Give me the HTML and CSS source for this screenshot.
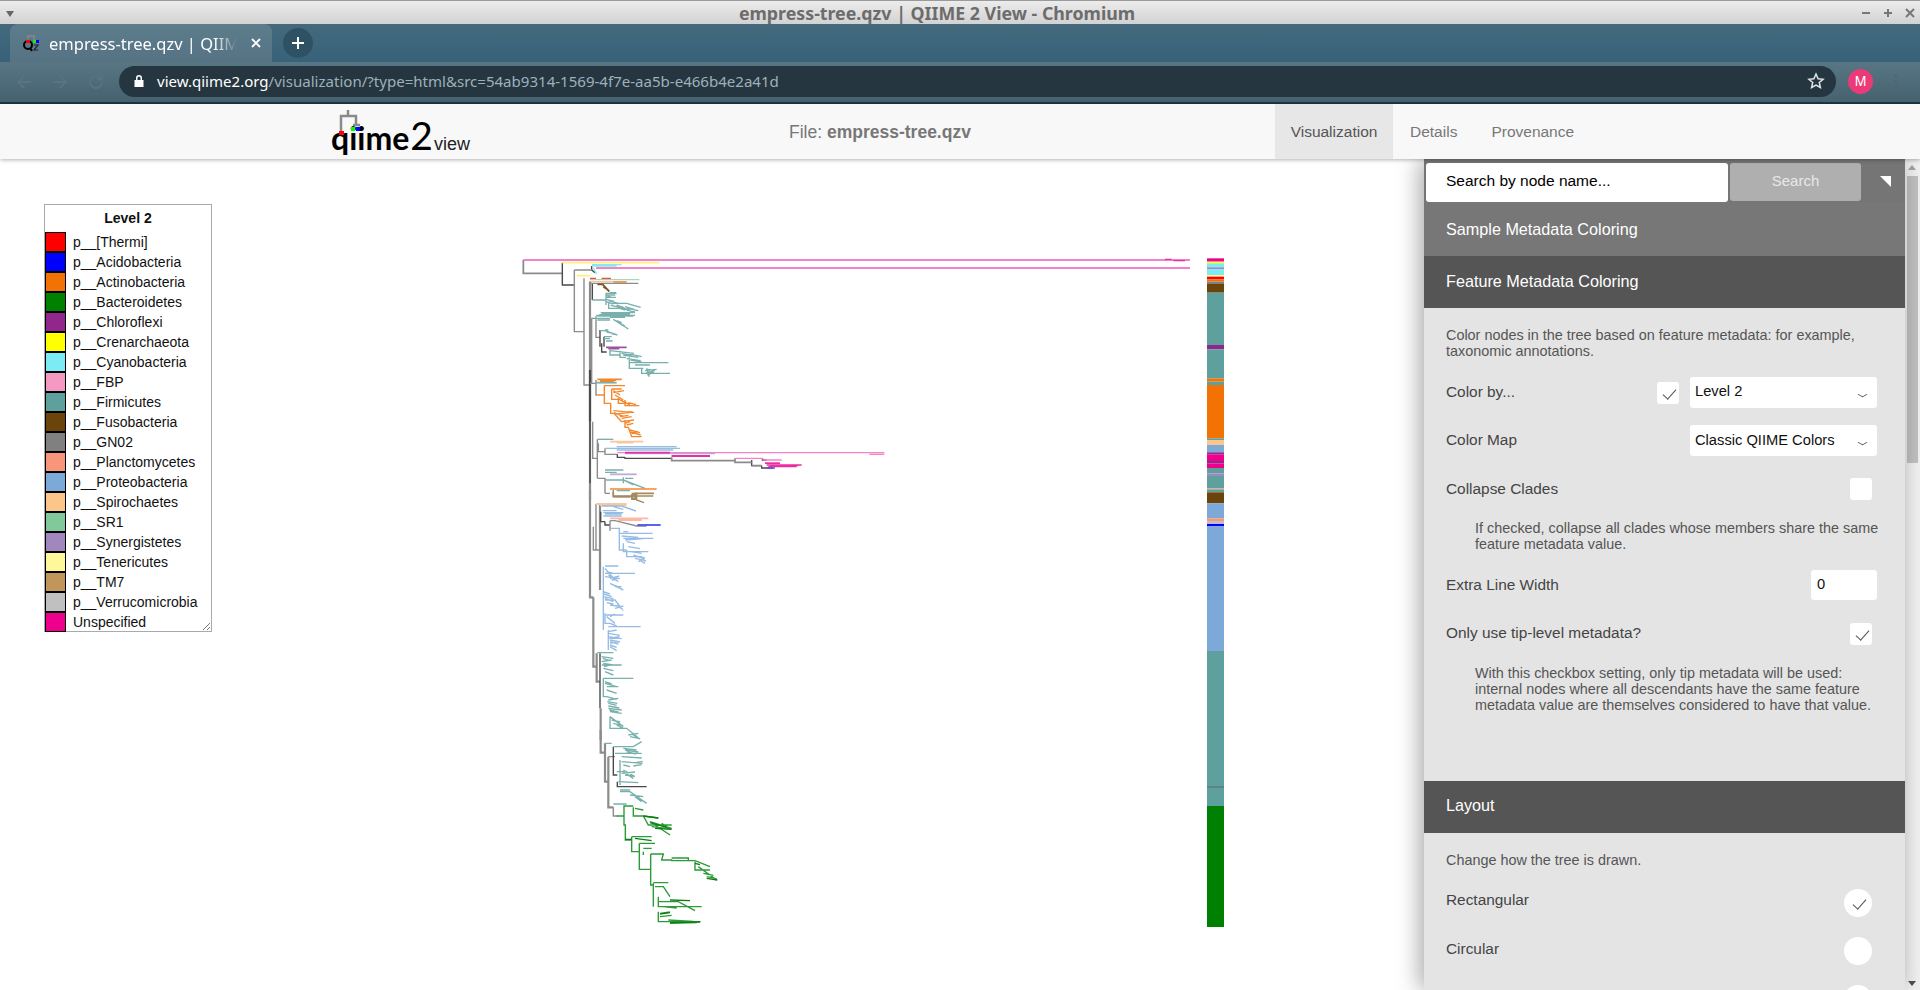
FILE: index.html
```html
<!DOCTYPE html>
<html lang="en">
<head>
  <meta charset="UTF-8">
  <title>empress-tree.qzv | QIIME 2 View - Chromium</title>
  <link rel="stylesheet" href="styles.css">
</head>
<body>

  <!-- window title -->
  <div class="titlebar">
    <span class="win-menu"></span>
    <span class="win-title">empress-tree.qzv | QIIME 2 View - Chromium</span>
    <div class="win-buttons">
      <svg width="12" height="12" viewBox="0 0 12 12"><path d="M2 6h8" class="win-icon"/></svg>
      <svg width="12" height="12" viewBox="0 0 12 12"><path d="M2 6h8M6 2v8" class="win-icon"/></svg>
      <svg width="12" height="12" viewBox="0 0 12 12"><path d="M2 2l8 8M10 2l-8 8" class="win-icon"/></svg>
    </div>
  </div>

  <!-- browser tabs -->
  <div class="tabstrip">
    <div class="tab">
      <svg class="favicon" width="18" height="18" viewBox="0 0 18 18">
        <path d="M6 5V2h6v4" class="fav-tree"/>
        <circle cx="6" cy="11" r="4" class="fav-q"/>
        <path d="M8 14l2 3" class="fav-q"/>
        <rect x="4" y="6" width="4" height="3" class="fav-red"/>
        <rect x="11" y="6" width="3" height="3" class="fav-green"/>
        <rect x="14" y="6" width="3" height="3" class="fav-blue"/>
        <path d="M12 11h4l-4 5h4" class="fav-two"/>
      </svg>
      <span class="tab-title">empress-tree.qzv | QIIM</span>
      <svg class="tab-close" width="12" height="12" viewBox="0 0 12 12"><path d="M2 2l8 8M10 2l-8 8"/></svg>
    </div>
    <div class="new-tab">
      <svg width="16" height="16" viewBox="0 0 16 16"><path d="M8 2v12M2 8h12"/></svg>
    </div>
  </div>

  <!-- browser toolbar -->
  <div class="toolbar">
    <div class="nav-buttons">
      <svg width="18" height="18" viewBox="0 0 18 18"><path d="M16 9H3M9 3L3 9l6 6"/></svg>
      <svg width="18" height="18" viewBox="0 0 18 18"><path d="M2 9h13M9 3l6 6-6 6"/></svg>
      <svg width="18" height="18" viewBox="0 0 18 18"><path d="M15 9a6 6 0 1 1-2-4.500L15 6.500M15 2v4.500h-4.500"/></svg>
    </div>
    <div class="omnibox">
      <svg class="lock" width="12" height="14" viewBox="0 0 12 14"><path d="M3 6V4a3 3 0 0 1 6 0v2h1.500v7h-9V6zM4.500 6h3V4a1.500 1.500 0 0 0-3 0z"/></svg>
      <span class="url"><b>view.qiime2.org</b>/visualization/?type=html&amp;src=54ab9314-1569-4f7e-aa5b-e466b4e2a41d</span>
      <svg class="star" width="18" height="18" viewBox="0 0 18 18"><path d="M9 2l2.100 4.700 5 .5-3.800 3.300 1.100 5L9 13l-4.400 2.500 1.100-5L1.900 7.200l5-.5z"/></svg>
    </div>
    <div class="avatar">M</div>
    <div class="menu-dots"><i></i><i></i><i></i></div>
  </div>

  <!-- qiime2 view navbar -->
  <div class="qiime-nav">
    <div class="logo">
      <svg class="logo-tree" width="24" height="26" viewBox="0 0 24 26">
        <path d="M9 0v6M2 24V6h15v9M14 15h7" class="logo-branch"/>
        <rect x="0" y="21" width="5" height="4" class="fav-red"/>
        <rect x="12" y="17" width="4" height="4" class="fav-green"/>
        <rect x="17" y="17" width="4" height="4" class="fav-blue"/>
      </svg>
      <span class="logo-qiime">qiime</span><span class="logo-two">2</span><span class="logo-view">view</span>
    </div>
    <div class="file-name">File: <b>empress-tree.qzv</b></div>
    <ul class="nav-tabs">
      <li class="active">Visualization</li>
      <li class="tab-details">Details</li>
      <li>Provenance</li>
    </ul>
  </div>

  <div class="content">
    <div class="stage">

      <!-- the tree and its barplot, coordinates taken from the page -->
      <svg class="tree" width="1300" height="831" viewBox="0 159 1300 831">
        <g transform="translate(510 240) scale(.33333)">
          <path class="c-pink thick" d="M40 60H2040M258 84H2040"/>
          <path class="c-hot" d="M1965 58H1985M1990 62H2025"/>
          <path class="c-grey thick" d="M40 60V100H157"/>
          <path class="c-dark" d="M157 68V135H193M245 78V90L255 98"/>
          <path class="c-grey" d="M193 90V275H222M193 90H245M222 115V435H240"/>
          <path class="c-yellow thick" d="M157 68H448M200 107H240"/>
          <path class="c-cyan" d="M246 74H335M246 78H320M250 84L260 102"/>
          <path class="c-red" d="M240 115H258M275 115H303"/>
          <path class="c-sr" d="M240 119H388"/>
          <path class="c-tan" d="M237 125H350"/>
          <path class="c-orange" d="M310 126H350"/>
          <path class="c-grey" d="M240 130H385"/>
          <path class="c-grey wide" d="M240 125V780"/>
          <path class="c-dark wide" d="M240 390V545"/>
          <path class="c-dark" d="M240 545V730M247 132V180"/>
          <path class="c-firm" d="M247 180H288M288 160V195M288 160H320M288 165H316M290 172H318M288 178L312 184M288 185L310 192M296 190V205H345M310 190H350L392 202M320 195L365 215H375M335 200L355 212M300 158H318M292 168L305 172M296 182L325 190M302 196L340 204M330 205L345 210M345 200L372 208M350 205L385 212"/>
          <path class="c-brown thick" d="M262 133H278L298 155M280 140L295 150"/>
          <path class="c-grey" d="M245 235V430M245 235H258"/>
          <path class="c-firm" d="M258 228V240M258 226H375M272 218H375M258 235H300M275 222H360M262 228H370M300 232H345M310 238L355 267M262 240H300M268 224H350M320 242L335 248M330 250L345 258"/>
          <path class="c-grey" d="M258 240V292H270"/>
          <path class="c-dark" d="M270 270V320M282 290V320M275 310V336H290"/>
          <path class="c-firm" d="M270 272H285L322 285M285 270H295M282 290H305M282 296H300M288 303H308M290 276L310 280M300 280L318 284"/>
          <path class="c-purple thick" d="M288 322H350M295 326H328"/>
          <path class="c-firm" d="M300 330V345H330M330 332V352H348M300 332L372 340M348 340L395 350M335 340L365 346M358 352V385H400M358 368H475M375 375H420M395 385V400H480M410 385L418 410M405 392L440 388M410 398L435 392M415 388L430 396M340 345L385 352M350 356L392 362M362 360L395 366M405 400L432 396M412 405L428 398"/>
          <path class="c-grey" d="M240 430H258M258 420V465H262"/>
          <path class="c-orange thick" d="M262 418H335M270 420H318M270 424H312"/>
          <path class="c-firm thick" d="M258 428H320"/>
          <path class="c-orange" d="M262 465H283M283 437V490H302M283 437H345M305 447H335M305 447V478H330M310 458L342 452M325 470V490H365M345 480V497H388M302 490V520H312L335 545M310 512L372 518M320 522L368 516M330 530L355 526M335 545L372 540M345 540V562H355M350 555L370 550M355 562L365 590H395M360 570L390 578M365 580L385 574M310 452L330 465M315 465L340 480M330 480L360 495M355 488L378 494M312 518L340 530M335 535L365 530M345 550L360 545M358 575L392 585"/>
          <path class="c-grey" d="M248 545V655H262M262 598V715"/>
          <path class="c-firm" d="M262 598H310"/>
          <path class="c-tan thick" d="M300 605H400M320 608H370"/>
          <path class="c-grey" d="M265 610V635H285M285 625V643H322"/>
          <path class="c-blue" d="M285 625H510M320 620H500M320 630H490"/>
          <path class="c-blue thick" d="M345 640H615"/>
          <path class="c-pink" d="M322 638H1123M485 648H600M1078 643H1123"/>
          <path class="c-hot thick" d="M345 638H480M485 648H600"/>
          <path class="c-dark" d="M322 643V652H345M345 652V655H485M725 660V677H755M755 660H770M755 677V684H790"/>
          <path class="c-grey thick" d="M485 652V662H675M675 655V667H725M725 677H755"/>
          <path class="c-pink" d="M675 655H760M760 660H815M765 668H810"/>
          <path class="c-hot" d="M770 675H875M775 680H860M765 670H810M780 677H865"/>
          <path class="c-acido" d="M770 684H795"/>
          <path class="c-grey" d="M262 715H285V760M285 760H300"/>
          <path class="c-firm" d="M285 690H340M285 697H320M285 720H340L405 745M340 712V730M345 715H370M320 752H360M345 722L370 735"/>
          <path class="c-syner thick" d="M300 703H380"/>
          <path class="c-orange" d="M300 747H440"/>
          <path class="c-dark" d="M310 755V770H360"/>
          <path class="c-tm7 thick" d="M310 770H372L375 760H432M366 765h10v12h-10z"/>
        </g>
        <g transform="translate(560 490) scale(.33333)">
          <path class="c-tm7" d="M160 0V18H280M215 10H230V30L252 38"/>
          <path class="c-grey wide" d="M90 0V322H100M100 322V530H110M120 45V300"/>
          <path class="c-grey" d="M100 110V180H120M108 42V180"/>
          <path class="c-tan thick" d="M108 42H200M120 45H200"/>
          <path class="c-blue" d="M125 48H185L228 63M160 50L190 58M130 68H190M135 72H185M130 78H185M128 62H170"/>
          <path class="c-dark" d="M122 65V95H135M135 95V105H150"/>
          <path class="c-salmon thick" d="M150 85H265M175 90H245"/>
          <path class="c-grey" d="M150 92V122M150 92H165L230 108H260"/>
          <path class="c-acido thick" d="M232 105H302"/>
          <path class="c-blue" d="M150 115H178V140M178 120V180H200M180 130H278M190 125H205M190 145H280M200 155L225 160M190 160V185H265M200 180V200H245L255 215M220 195L250 205M225 205L258 212M235 215L250 208M185 138L235 142M195 150L250 146M205 170L240 176M212 185L245 190M230 200L255 204M238 210L255 220"/>
          <path class="c-blue" d="M130 230V420M135 228H175M135 235L165 270M135 250H225M135 260L180 266M150 265L178 258M150 280L190 300M165 290H185M130 305L150 312M130 320L160 326M135 330H165L190 362M150 345L185 350M165 355L190 348M135 370V400H150M135 375H190M150 380L165 372M145 410H242M150 400L170 408M145 420V480M145 430L180 436M145 440L185 446M150 450L180 456M150 460L175 454M150 470L170 482M140 245L160 250M145 255L175 275M155 270L175 264M160 285L180 292M132 312L155 320M135 325L160 335M140 338L160 342M170 345L188 358M140 380L165 400M145 425L170 420M148 445L178 440M150 455L175 462M150 465L170 472"/>
          <path class="c-grey wide" d="M110 490V575H120M122 655V750"/>
          <path class="c-dark" d="M120 490V655"/>
          <path class="c-firm" d="M112 488H160M125 500L160 505M125 515L155 510M125 525H185M130 535L160 542M135 545L160 555M130 565V620H140M130 565H220M140 590H175M140 600L170 610M145 630L175 625M145 640L170 646M145 655L185 660M150 665L185 670M150 680V715H170M150 680L190 710M155 715H200L240 748M205 735L235 730M210 740L240 746M128 505L150 512M130 520L170 526M132 530L155 524M135 575L155 582M135 580L170 590M140 620L170 628M142 635L172 640M145 648L178 654M148 660L175 666M155 690L180 696M160 700L185 706M170 705L190 715M215 730L235 745"/>
        </g>
        <g transform="translate(580 730) scale(.33333)">
          <path class="c-grey wide" d="M62 0V68H75M75 40V155H85M85 80V232H100"/>
          <path class="c-grey" d="M85 80H105M100 232V258H108"/>
          <path class="c-dark" d="M100 50V135H112M112 155V170H200"/>
          <path class="c-firm" d="M75 40H95M100 50H160L185 35M130 55L170 60M105 70H185M125 80L185 84M125 95L188 100M130 105L150 110M120 90V165M110 125H130L160 145M125 130L165 126M115 155L175 158M120 185H150L200 220M150 195L190 200M165 200L185 215M120 180H150M100 222H140M135 60L175 66M140 65L168 72M155 100L188 94M160 108L185 104M130 120L165 140M135 135L160 138"/>
          <path class="c-green" d="M108 258H132V228H160M132 228V285H136V330H155M160 232V258H190L205 285H275M165 235L190 240M190 258L235 264M210 275L275 295M215 290L270 296M225 285L270 315M245 280L260 290M155 320V365H178M155 320H215M178 340V418H212M178 340H225M190 355H215M190 365V375M212 372V465H220M212 372H250L245 390H275V392H325M275 384H325V392H345L390 410M345 395V420H390M355 410L410 450M370 430L400 436M380 440L410 446M220 460V530M220 458H265M225 470H250L270 500M235 500V530H365M235 515H295L345 542M250 530L290 534M235 545V575H360M240 560L275 556M250 575H362M265 570L340 574M270 580L350 578M240 550L270 546"/>
          <path class="c-green-deep" d="M190 258L235 264M210 278L260 292M225 295L275 298M136 328H155M165 325L215 332M380 445L412 450M270 578L360 576M240 552L270 548M270 510L330 512M345 400L360 404"/>
        </g>

        <!-- barplot -->
        <g transform="translate(1207 240) scale(1 .33333)">
          <rect class="b-hot" y="55" width="17" height="10"/>
          <rect class="b-yellow" y="65" width="17" height="5"/>
          <rect class="b-cyan" y="70" width="17" height="12"/>
          <rect class="b-syner" y="82" width="17" height="6"/>
          <rect class="b-cyan" y="88" width="17" height="17"/>
          <rect class="b-tener" y="105" width="17" height="5"/>
          <rect class="b-red" y="110" width="17" height="8"/>
          <rect class="b-orange" y="118" width="17" height="7"/>
          <rect class="b-grey" y="125" width="17" height="7"/>
          <rect class="b-brown" y="132" width="17" height="26"/>
          <rect class="b-firm" y="158" width="17" height="157"/>
          <rect class="b-purple" y="315" width="17" height="13"/>
          <rect class="b-firm" y="328" width="17" height="87"/>
          <rect class="b-orange" y="415" width="17" height="10"/>
          <rect class="b-firm" y="425" width="17" height="10"/>
          <rect class="b-orange" y="435" width="17" height="160"/>
          <rect class="b-firm" y="595" width="17" height="5"/>
          <rect class="b-spiro" y="600" width="17" height="15"/>
          <rect class="b-blue" y="615" width="17" height="22"/>
          <rect class="b-purple" y="637" width="17" height="6"/>
          <rect class="b-hot" y="643" width="17" height="20"/>
          <rect class="b-purple" y="663" width="17" height="7"/>
          <rect class="b-hot" y="670" width="17" height="14"/>
          <rect class="b-firm" y="684" width="17" height="16"/>
          <rect class="b-syner" y="700" width="17" height="8"/>
          <rect class="b-firm" y="708" width="17" height="37"/>
          <rect class="b-salmon" y="745" width="17" height="3"/>
          <rect class="b-firm" y="748" width="17" height="9"/>
          <rect class="b-brown" y="757" width="17" height="33"/>
          <rect class="b-blue" y="790" width="17" height="45"/>
          <rect class="b-salmon" y="835" width="17" height="8"/>
          <rect class="b-silver" y="843" width="17" height="9"/>
          <rect class="b-acido" y="852" width="17" height="7"/>
          <rect class="b-blue" y="859" width="17" height="374"/>
          <rect class="b-firm" y="1233" width="17" height="465"/>
          <rect class="b-dark" y="1640" width="17" height="2"/>
          <rect class="b-green" y="1698" width="17" height="363"/>
        </g>
      </svg>

      <!-- legend -->
      <div class="legend">
        <div class="legend-title">Level 2</div>
        <div class="legend-row"><span class="swatch b-red"></span>p__[Thermi]</div>
        <div class="legend-row"><span class="swatch b-acido"></span>p__Acidobacteria</div>
        <div class="legend-row"><span class="swatch b-orange"></span>p__Actinobacteria</div>
        <div class="legend-row"><span class="swatch b-green"></span>p__Bacteroidetes</div>
        <div class="legend-row"><span class="swatch b-purple"></span>p__Chloroflexi</div>
        <div class="legend-row"><span class="swatch b-yellow"></span>p__Crenarchaeota</div>
        <div class="legend-row"><span class="swatch b-cyan"></span>p__Cyanobacteria</div>
        <div class="legend-row"><span class="swatch b-fbp"></span>p__FBP</div>
        <div class="legend-row"><span class="swatch b-firm"></span>p__Firmicutes</div>
        <div class="legend-row"><span class="swatch b-brown"></span>p__Fusobacteria</div>
        <div class="legend-row"><span class="swatch b-grey"></span>p__GN02</div>
        <div class="legend-row"><span class="swatch b-salmon"></span>p__Planctomycetes</div>
        <div class="legend-row"><span class="swatch b-blue"></span>p__Proteobacteria</div>
        <div class="legend-row"><span class="swatch b-spiro"></span>p__Spirochaetes</div>
        <div class="legend-row"><span class="swatch b-sr"></span>p__SR1</div>
        <div class="legend-row"><span class="swatch b-syner"></span>p__Synergistetes</div>
        <div class="legend-row"><span class="swatch b-tener"></span>p__Tenericutes</div>
        <div class="legend-row"><span class="swatch b-tm7"></span>p__TM7</div>
        <div class="legend-row"><span class="swatch b-silver"></span>p__Verrucomicrobia</div>
        <div class="legend-row"><span class="swatch b-hot"></span>Unspecified</div>
        <svg class="grip" width="10" height="10" viewBox="0 0 10 10"><path d="M9 2L2 9M9 6L6 9"/></svg>
      </div>
    </div>

    <!-- side panel -->
    <div class="side-panel">
      <div class="search-row">
        <div class="search-input">Search by node name...</div>
        <div class="search-btn">Search</div>
        <div class="hide-btn"></div>
      </div>
      <div class="section-head light">Sample Metadata Coloring</div>
      <div class="section-head">Feature Metadata Coloring</div>

      <div class="section-body feature-body">
        <p class="hint">Color nodes in the tree based on feature metadata: for example, taxonomic annotations.</p>
        <div class="row row-color-by">
          <label>Color by...</label>
          <span class="check on"></span>
          <div class="select">Level 2</div>
        </div>
        <div class="row row-map">
          <label>Color Map</label>
          <div class="select">Classic QIIME Colors</div>
        </div>
        <div class="row row-collapse">
          <label>Collapse Clades</label>
          <span class="check"></span>
        </div>
        <p class="hint note">If checked, collapse all clades whose members share the same feature metadata value.</p>
        <div class="row row-width">
          <label>Extra Line Width</label>
          <div class="number">0</div>
        </div>
        <div class="row row-tip">
          <label>Only use tip-level metadata?</label>
          <span class="check on"></span>
        </div>
        <p class="hint note">With this checkbox setting, only tip metadata will be used: internal nodes where all descendants have the same feature metadata value are themselves considered to have that value.</p>
      </div>

      <div class="section-head layout-head">Layout</div>
      <div class="section-body layout-body">
        <p class="hint">Change how the tree is drawn.</p>
        <div class="row row-radio first">
          <label>Rectangular</label>
          <span class="radio on"></span>
        </div>
        <div class="row row-radio">
          <label>Circular</label>
          <span class="radio"></span>
        </div>
        <div class="row row-radio">
          <label></label>
          <span class="radio"></span>
        </div>
      </div>
    </div>

    <div class="scrollbar">
      <span class="arrow-up"></span>
      <span class="thumb"></span>
      <span class="arrow-down"></span>
    </div>
  </div>

</body>
</html>
```

FILE: styles.css
```css
* {
  box-sizing: border-box;
}

html, body {
  margin: 0;
  height: 990px;
  overflow: hidden;
  background: #fff;
  font-family: "Liberation Sans", Arial, sans-serif;
}

/* window title */
.titlebar {
  height: 24px;
  border-top: 1px solid #9a9a9a;
  background: linear-gradient(#ececec, #d2d2d2);
  display: flex;
  align-items: center;
  justify-content: center;
  padding-right: 46px;
  position: relative;
}

.win-title {
  font-family: "Noto Sans", sans-serif;
  font-weight: 700;
  font-size: 17.8px;
  color: #6c6c6c;
}

.win-menu {
  position: absolute;
  left: 6px;
  top: 10px;
  border-left: 4px solid transparent;
  border-right: 4px solid transparent;
  border-top: 6px solid #666;
}

.win-buttons {
  position: absolute;
  right: 4px;
  top: 6px;
  display: flex;
  gap: 10px;
}

.win-icon {
  stroke: #777;
  stroke-width: 2;
  fill: none;
}

/* browser chrome */
.tabstrip {
  height: 38px;
  background: linear-gradient(#44697c, #37627a);
  display: flex;
  align-items: flex-start;
  padding-left: 10px;
}

.tab {
  width: 262px;
  height: 38px;
  background: linear-gradient(#5c7c8c, #567384);
  border-radius: 8px 8px 0 0;
  display: flex;
  align-items: center;
  padding: 0 10px 0 12px;
}

.favicon {
  flex: none;
  margin-right: 9px;
}

.fav-tree {
  fill: none;
  stroke: #888;
  stroke-width: 1.5;
}

.fav-q {
  fill: none;
  stroke: #000;
  stroke-width: 2;
}

.fav-two {
  fill: none;
  stroke: #222;
  stroke-width: 1.2;
}

.fav-red { fill: #f00; }
.fav-green { fill: #0f0; }
.fav-blue { fill: #00f; }

.tab-title {
  font-family: "Noto Sans", sans-serif;
  font-size: 16.5px;
  color: #fff;
  white-space: nowrap;
  flex: 1;
  -webkit-mask-image: linear-gradient(to right, #000 165px, transparent 188px);
  mask-image: linear-gradient(to right, #000 165px, transparent 188px);
}

.tab-close {
  flex: none;
  margin-left: 4px;
}

.tab-close path {
  stroke: #fff;
  stroke-width: 1.8;
  fill: none;
}

.new-tab {
  width: 30px;
  height: 30px;
  margin: 4px 0 0 11px;
  border-radius: 50%;
  background: #2e5264;
  display: flex;
  align-items: center;
  justify-content: center;
}

.new-tab path {
  stroke: #fff;
  stroke-width: 2;
  fill: none;
}

.toolbar {
  height: 42px;
  background: linear-gradient(#587684, #46616f);
  border-bottom: 2px solid #1f3541;
  display: flex;
  align-items: center;
}

.nav-buttons {
  width: 119px;
  display: flex;
  gap: 18px;
  padding-left: 15px;
}

.nav-buttons path {
  stroke: #5b7280;
  stroke-width: 1.8;
  fill: none;
}

.omnibox {
  width: 1717px;
  height: 31px;
  margin-top: -2px;
  background: #263640;
  border-radius: 16px;
  display: flex;
  align-items: center;
  padding-left: 14px;
}

.lock {
  flex: none;
  margin-right: 12px;
}

.lock path {
  fill: #fff;
  fill-rule: evenodd;
}

.url {
  font-family: "Noto Sans", sans-serif;
  font-size: 15.05px;
  color: #9fb0ba;
  flex: 1;
  white-space: nowrap;
}

.url b {
  font-weight: 400;
  color: #fff;
}

.star {
  flex: none;
  margin-right: 11px;
}

.star path {
  fill: none;
  stroke: #dfe5e8;
  stroke-width: 1.5;
}

.avatar {
  width: 25px;
  height: 25px;
  margin: -2px 0 0 12px;
  border-radius: 50%;
  background: #ec3a78;
  color: #fff;
  font-size: 14px;
  text-align: center;
  line-height: 25px;
}

.menu-dots {
  margin: -2px 0 0 21px;
  display: flex;
  flex-direction: column;
  gap: 3px;
}

.menu-dots i {
  width: 3px;
  height: 3px;
  border-radius: 50%;
  background: #4c6674;
}

/* qiime2 navbar */
.qiime-nav {
  height: 55px;
  background: #f8f8f8;
  box-shadow: 0 1px 4px rgba(0, 0, 0, .3);
  display: flex;
  align-items: center;
  position: relative;
  z-index: 2;
}

.logo {
  position: absolute;
  left: 331px;
  top: 0;
  height: 55px;
  display: flex;
  align-items: baseline;
  padding-top: 11px;
  color: #000;
  line-height: 40px;
}

.logo-tree {
  position: absolute;
  left: 8px;
  top: 6px;
}

.logo-branch {
  fill: none;
  stroke: #8a8a8a;
  stroke-width: 2.5;
}

.logo-qiime {
  font-family: Lato, sans-serif;
  font-weight: 700;
  font-size: 32px;
}

.logo-two {
  font-family: Lato, sans-serif;
  font-size: 39px;
  margin-left: 1px;
}

.logo-view {
  font-size: 18px;
  color: #222;
  margin-left: 1px;
}

.file-name {
  position: absolute;
  left: 789px;
  top: 18px;
  font-size: 17.5px;
  color: #777;
}

.nav-tabs {
  list-style: none;
  margin: 0 0 0 1275px;
  padding: 0;
  height: 55px;
  display: flex;
  font-size: 15.5px;
  color: #777;
}

.nav-tabs li {
  padding: 0 17px;
  line-height: 55px;
}

.nav-tabs .active {
  width: 118px;
  padding: 0;
  text-align: center;
  background: #e7e7e7;
  color: #555;
}

/* main area */
.content {
  height: 831px;
  display: flex;
  overflow: hidden;
}

.stage {
  flex: 1;
  position: relative;
}

.tree {
  position: absolute;
  left: 0;
  top: 0;
  filter: blur(.45px);
}

.tree path {
  fill: none;
  stroke-width: 1.4;
  vector-effect: non-scaling-stroke;
}

.tree .thick { stroke-width: 1.8; }
.tree .wide { stroke-width: 2.2; }

.c-pink { stroke: #f582c8; }
.c-hot { stroke: #ec2ca0; }
.c-grey { stroke: #8c8c8c; }
.c-dark { stroke: #4a4a4a; }
.c-yellow { stroke: #fff07a; }
.c-cyan { stroke: #8ae8f0; }
.c-red { stroke: #f44; }
.c-sr { stroke: #a6d8b8; }
.c-tan { stroke: #f5c8a0; }
.c-orange { stroke: #f5862a; }
.c-firm { stroke: #78b0ae; }
.c-brown { stroke: #7a5520; }
.c-purple { stroke: #a050a0; }
.c-blue { stroke: #97bce3; }
.c-acido { stroke: #5050f0; }
.c-syner { stroke: #c0aad8; }
.c-tm7 { stroke: #a58a60; }
.c-salmon { stroke: #fbb8a4; }
.c-green { stroke: #2d9a3a; }
.c-green-deep { stroke: #0b7d12; }

.b-red { background: #f00; fill: #f00; }
.b-acido { background: #00f; fill: #00f; }
.b-orange { background: #f27304; fill: #f27304; }
.b-green { background: #008000; fill: #008000; }
.b-purple { background: #91278d; fill: #91278d; }
.b-yellow { background: #ff0; fill: #ff0; }
.b-cyan { background: #7cecf4; fill: #7cecf4; }
.b-fbp { background: #f49ac2; fill: #f49ac2; }
.b-firm { background: #5da09e; fill: #5da09e; }
.b-brown { background: #6b440b; fill: #6b440b; }
.b-grey { background: #808080; fill: #808080; }
.b-salmon { background: #f79679; fill: #f79679; }
.b-blue { background: #7da9d8; fill: #7da9d8; }
.b-spiro { background: #fcc688; fill: #fcc688; }
.b-sr { background: #80c99b; fill: #80c99b; }
.b-syner { background: #a287bf; fill: #a287bf; }
.b-tener { background: #fff899; fill: #fff899; }
.b-tm7 { background: #c0965b; fill: #c0965b; }
.b-silver { background: #c0c0c0; fill: #c0c0c0; }
.b-hot { background: #ec008c; fill: #ec008c; }
.b-dark { fill: #555; }

/* legend */
.legend {
  position: absolute;
  left: 44px;
  top: 45px;
  width: 168px;
  height: 428px;
  background: #fff;
  border: 1px solid #aaa;
  font-size: 14px;
  color: #111;
}

.legend-title {
  height: 27px;
  line-height: 27px;
  text-align: center;
  font-weight: 700;
  font-size: 14px;
  color: #111;
}

.legend-row {
  height: 20px;
  display: flex;
  align-items: center;
  white-space: nowrap;
}

.swatch {
  width: 21px;
  height: 20px;
  border: 1px solid #000;
  margin-right: 7px;
  flex: none;
}

.grip {
  position: absolute;
  right: 0;
  bottom: 0;
}

.grip path {
  stroke: #777;
  fill: none;
}

/* side panel */
.side-panel {
  width: 481px;
  background: #e4e4e4;
  box-shadow: -4px 0 22px rgba(0, 0, 0, .35);
  position: relative;
  z-index: 1;
  flex: none;
}

.search-row {
  height: 43px;
  background: #757575;
  display: flex;
  padding: 4px 0 0 2px;
}

.search-input {
  width: 302px;
  height: 39px;
  background: #fff;
  border-radius: 3px;
  padding-left: 20px;
  font-size: 15.5px;
  line-height: 36px;
  color: #000;
}

.search-btn {
  width: 131px;
  height: 38px;
  margin-left: 2px;
  background: #afafaf;
  border-radius: 3px;
  color: #e8e8e8;
  font-size: 15px;
  line-height: 36px;
  text-align: center;
}

.hide-btn {
  width: 0;
  height: 0;
  margin: 13px 0 0 19px;
  border-top: 11px solid #fff;
  border-left: 11px solid transparent;
}

.section-head {
  height: 52px;
  background: #555;
  color: #fff;
  font-size: 16.2px;
  line-height: 51px;
  padding-left: 22px;
}

.section-head.light {
  height: 54px;
  line-height: 55px;
  background: #777;
}

.section-head.layout-head {
  line-height: 49px;
}

.section-body {
  padding: 0 28px 0 22px;
  color: #444;
}

.hint {
  margin: 0;
  font-size: 14.4px;
  line-height: 16px;
  color: #555;
}

.note {
  margin: 20px -6px 0 29px;
}

.feature-body {
  height: 473px;
  padding-top: 19px;
}

.layout-body {
  padding-top: 19px;
}

.row {
  display: flex;
  align-items: center;
}

.row label {
  flex: 1;
  font-size: 15.4px;
  color: #444;
  padding-bottom: 2px;
}

.row-color-by { height: 31px; margin-top: 18px; }
.row-map { height: 31px; margin-top: 17px; }
.row-collapse { height: 22px; margin-top: 22px; }
.row-width { height: 30px; margin-top: 18px; }
.row-tip { height: 23px; margin-top: 22px; }
.row-radio { height: 28px; margin-top: 20px; }
.row-radio.first { margin-top: 21px; }
.row-radio label { padding-bottom: 5px; }
.row-radio.first label { padding-bottom: 7px; }
.row-collapse label,
.row-width label { padding-bottom: 0; }

.check {
  width: 22px;
  height: 22px;
  background: #fff;
  border-radius: 3px;
  margin-right: 5px;
  position: relative;
  flex: none;
}

.row-color-by .check {
  margin-right: 11px;
}

.check.on::after,
.radio.on::after {
  content: "";
  position: absolute;
  left: 9px;
  top: 4px;
  width: 6px;
  height: 12px;
  border-right: 1px solid #555;
  border-bottom: 1px solid #555;
  transform: rotate(42deg);
}

.radio {
  width: 28px;
  height: 28px;
  border-radius: 50%;
  background: #fff;
  margin-right: 5px;
  position: relative;
  flex: none;
}

.radio.on::after {
  left: 12px;
  top: 7px;
}

.select {
  width: 187px;
  height: 31px;
  background: #fff;
  border-radius: 3px;
  font-size: 14.7px;
  line-height: 29px;
  color: #111;
  padding-left: 5px;
  position: relative;
}

.row-map .select {
  line-height: 30px;
}

.select::after {
  content: "";
  position: absolute;
  right: 11px;
  top: 14px;
  width: 6px;
  height: 6px;
  border-right: 1px solid #555;
  border-bottom: 1px solid #555;
  transform: scaleY(.55) rotate(45deg);
}

.number {
  width: 66px;
  height: 30px;
  background: #fff;
  border-radius: 3px;
  font-size: 14.7px;
  line-height: 28px;
  color: #111;
  padding-left: 6px;
}

.scrollbar {
  width: 15px;
  background: #f1f1f1;
  flex: none;
  position: relative;
}

.thumb {
  position: absolute;
  left: 2px;
  top: 17px;
  width: 11px;
  height: 287px;
  background: #c1c1c1;
}

.arrow-up,
.arrow-down {
  position: absolute;
  left: 3px;
  border-left: 4px solid transparent;
  border-right: 4px solid transparent;
}

.arrow-up {
  top: 6px;
  border-bottom: 5px solid #a3a3a3;
}

.arrow-down {
  bottom: 4px;
  border-top: 5px solid #505050;
}
```
